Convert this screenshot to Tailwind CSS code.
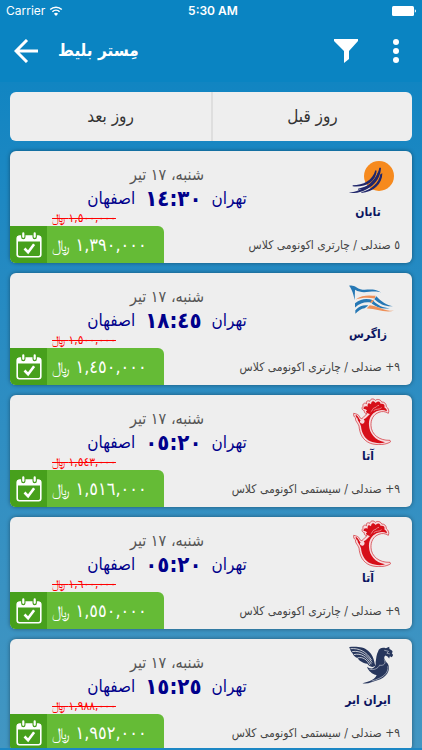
<!DOCTYPE html>
<html lang="fa">
<head>
  <meta charset="UTF-8">
  <meta name="viewport" content="width=device-width, initial-scale=1.0">
  <title>مِستر بلیط</title>
  <script src="https://cdn.jsdelivr.net/npm/@tailwindcss/browser@4"></script>
</head>
<body class="bg-[#0a84c2] font-['DejaVu_Sans_Condensed','DejaVu_Sans',sans-serif]">
  <!-- Icons and airline logos -->
  <svg class="hidden" xmlns="http://www.w3.org/2000/svg">
    <symbol id="calendar" viewBox="0 0 26 26">
      <rect x="1.2" y="4.2" width="23.6" height="20.6" rx="2.2" fill="none" stroke="#fff" stroke-width="1.6" />
      <path d="M1 9.5V6a2.5 2.5 0 0 1 2.5-2.5h19A2.5 2.5 0 0 1 25 6v3.5z" fill="#fff" />
      <path d="M7.3 1.5v3.6M18.7 1.5v3.6" stroke="#47a01c" stroke-width="4.4" stroke-linecap="round" />
      <path d="M7.3 1.4v3.4M18.7 1.4v3.4" stroke="#fff" stroke-width="2.2" stroke-linecap="round" />
      <path d="M8.5 16.5l3.6 3.7 6-8" fill="none" stroke="#fff" stroke-width="2.6" />
    </symbol>
    <symbol id="taban" viewBox="420 45 138 102">
      <circle cx="510" cy="93" r="45" fill="#f68a1e" />
      <g fill="#20276b">
        <path d="M431 121C463 121 491 106 499 76l4 1C501 110 469 128 431 124z" />
        <path d="M421 143C462 138 503 110 511 68h5C515 112 472 147 421 144z" />
        <path d="M457 142C487 133 510 116 514 88l6-3C520 118 493 141 457 144z" />
        <path d="M447 131C475 125 499 112 506 84l5-6C507 114 480 132 447 134z" />
      </g>
    </symbol>
    <symbol id="zagros" viewBox="420 55 138 92">
      <path d="M420 60C427 57 436 60 442 64 464 81 486 61 517 80 489 70 465 88 438 72L437 103C434 88 429 70 420 60z" fill="#2678b5" />
      <path d="M440 101C459 86 483 88 500 90L497 98C477 94 458 95 440 101z" fill="#ef9058" />
      <path d="M438 112C458 97 475 98 493 103L487 111C470 107 455 111 438 125zM439 133C453 119 465 117 478 119L467 127C457 127 448 135 439 144z" fill="#2678b5" />
      <path d="M502 91C515 106 533 118 552 121 529 123 512 114 496 100zM493 105C506 119 523 127 542 127 520 131 503 124 488 113z" fill="#2678b5" />
      <path d="M482 118C510 121 527 136 555 135 525 143 501 127 473 128zM488 103l7-1-5 8-7 1z" fill="#ef9058" />
    </symbol>
    <symbol id="ata" viewBox="11 9 114 141">
      <path d="M13 55C22 57 28 58 31 66 33 72 38 72 41 68 44 63 49 60 53 56 47 56 44 52 45 47 38 46 36 38 41 34 39 26 46 22 52 26 50 18 55 15 61 19 64 10 73 10 78 16 86 10 95 15 97 21 106 20 112 28 111 35 118 40 120 48 117 55 108 49 98 48 89 52 72 58 64 74 65 92 66 117 88 137 122 136L124 140C113 149 84 152 63 145 40 136 31 116 29 93 24 81 16 76 19 69 14 66 12 61 13 55z" fill="#f7dadd" stroke="#d0222b" stroke-width="2" stroke-linejoin="round" />
      <path d="M19 60C28 62 28 72 34 76 29 80 34 88 41 86 47 84 47 76 43 73 50 70 54 64 62 57 54 55 50 54 50 49 57 47 50 42 43 42 41 36 47 31 55 35 54 26 57 21 65 28 66 16 73 16 79 24 86 16 93 19 94 27 103 25 108 31 105 37 112 42 114 46 112 49 100 42 86 46 77 52 63 60 58 75 59 91 60 114 77 137 107 142 94 147 74 144 63 139 46 131 37 115 35 94 32 82 24 77 25 71 20 67 19 64 19 60z" fill="#d60f19" />
      <path d="M64 51C71 47 67 41 76 38 84 37 81 31 89 31M73 47C82 40 89 45 97 38" fill="none" stroke="#f3b5b8" stroke-width="2" />
    </symbol>
    <symbol id="iranair" viewBox="420 52 138 118">
      <path d="M420 55C440 53 464 54 477 66 491 77 495 93 499 112 490 119 480 114 475 106 460 103 449 96 446 89 437 85 432 80 430 74 425 69 423 63 420 55z" fill="#27365c" />
      <path d="M424 60C450 58 471 68 488 95M429 69C455 65 473 78 489 102M434 78C456 73 472 84 487 107M445 88C461 84 473 92 483 110" fill="none" stroke="#eee" stroke-width="2.4" />
      <path d="M508 67C509 60 520 55 531 59L541 54 542 61C550 65 554 68 549 74L553 79 549 86 543 83 541 90 536 84 530 81C521 87 529 97 537 106 548 126 531 149 505 156 490 161 477 168 460 165 483 160 499 152 503 140 490 138 477 127 474 115 487 126 502 118 500 101 502 90 502 78 508 67z" fill="#27365c" />
      <path d="M481 122C493 126 507 121 512 110 524 113 533 104 526 93M537 113C540 134 522 149 488 158M526 65l13 3-5 6 9 2" fill="none" stroke="#c7cbd5" stroke-width="2" />
    </symbol>
  </svg>

  <div class="flex h-screen flex-col overflow-hidden">
    <!-- Status bar -->
    <div class="grid h-5 shrink-0 grid-cols-3 items-center px-1.5 pt-0.5 font-['Inter',sans-serif] text-xs text-white">
      <div class="flex items-center gap-1">
        <span>Carrier</span>
        <svg class="h-3 w-3.5" viewBox="0 0 14 12" fill="none" stroke="currentColor" stroke-width="1.5">
          <path d="M1.2 4.5a8.3 8.3 0 0 1 11.6 0M3.4 6.8a5.2 5.2 0 0 1 7.2 0" />
          <path d="M7 11L4.9 8.7a3 3 0 0 1 4.2 0z" fill="currentColor" stroke="none" />
        </svg>
      </div>
      <span class="pl-1 text-center font-semibold">5:30 AM</span>
      <svg class="h-2.5 w-6 justify-self-end" viewBox="0 0 24 10" fill="currentColor">
        <rect width="22" height="10" rx="1.5" />
        <path d="M22.8 3.2q1.2.5 1.2 1.8t-1.2 1.8z" />
      </svg>
    </div>

    <!-- App bar -->
    <header class="flex h-[62px] shrink-0 items-center px-3.5 text-white">
      <button type="button" aria-label="بازگشت">
        <svg class="size-6" viewBox="0 0 24 24" fill="none" stroke="currentColor" stroke-width="3">
          <path d="M24 12H2.5M13 1L2 12l11 11" />
        </svg>
      </button>
      <h1 dir="rtl" class="ml-5 text-[17px] font-bold">مِستر بلیط</h1>
      <button type="button" aria-label="فیلتر" class="ml-auto">
        <svg class="size-6" viewBox="0 0 24 24" fill="currentColor">
          <path d="M0 0h24v2l-9 10v8l-5 4V12L0 2z" />
        </svg>
      </button>
      <button type="button" aria-label="منو" class="mr-1.5 ml-8">
        <svg class="h-6 w-3" viewBox="0 0 12 24" fill="currentColor">
          <circle cx="6" cy="3" r="3" /><circle cx="6" cy="12" r="3" /><circle cx="6" cy="21" r="3" />
        </svg>
      </button>
    </header>

    <main dir="rtl" class="flex min-h-0 flex-1 flex-col gap-2.5 overflow-hidden border-b-2 border-[#1c87c4] bg-linear-to-b from-[#1185c2] to-[#4296c2] p-2.5">
      <!-- Day switch -->
      <nav class="grid h-[49px] shrink-0 grid-cols-2 divide-x-2 divide-[#dedede] rounded-md bg-[#eee] text-[17px] text-[#333]">
        <button type="button">روز قبل</button>
        <button type="button">روز بعد</button>
      </nav>

      <div id="flights" class="flex flex-col gap-2.5"></div>
    </main>
  </div>

  <script>
    const flights = [
      { logo: 'taban', size: 'h-[34px] w-[46px]', airline: 'تابان', time: '١٤:٣٠', old: '١,٥٠٠,٠٠٠', price: '١,٣٩٠,٠٠٠', seats: '٥ صندلی / چارتری اکونومی کلاس' },
      { logo: 'zagros', size: 'h-[31px] w-[46px]', airline: 'زاگرس', time: '١٨:٤٥', old: '١,٥٠٠,٠٠٠', price: '١,٤٥٠,٠٠٠', seats: '٩+ صندلی / چارتری اکونومی کلاس' },
      { logo: 'ata', size: 'h-[47px] w-[38px]', airline: 'آتا', time: '٠٥:٢٠', old: '١,٥٤٣,٠٠٠', price: '١,٥١٦,٠٠٠', seats: '٩+ صندلی / سیستمی اکونومی کلاس' },
      { logo: 'ata', size: 'h-[47px] w-[38px]', airline: 'آتا', time: '٠٥:٢٠', old: '١,٦٠٠,٠٠٠', price: '١,٥٥٠,٠٠٠', seats: '٩+ صندلی / چارتری اکونومی کلاس' },
      { logo: 'iranair', size: 'h-[39px] w-[46px]', airline: 'ایران ایر', time: '١٥:٢٥', old: '١,٩٨٨,٠٠٠', price: '١,٩٥٢,٠٠٠', seats: '٩+ صندلی / سیستمی اکونومی کلاس' },
    ];

    document.getElementById('flights').innerHTML = flights.map(f => `
      <article class="overflow-hidden rounded-md bg-[#eee] shadow-[0_0_4px_rgba(0,0,0,0.4)]">
        <div class="flex h-[75px]">
          <div class="flex w-[88px] flex-col items-center">
            <div class="flex h-[52px] items-center pl-2">
              <svg class="${f.size}"><use href="#${f.logo}" /></svg>
            </div>
            <h2 class="text-xs leading-[18px] font-bold text-[#0b1560]">${f.airline}</h2>
          </div>
          <div class="flex flex-1 flex-col pt-3">
            <p class="text-center text-base leading-6 text-[#555]">شنبه، ١٧ تیر</p>
            <div class="flex h-6 items-center justify-center gap-2.5 text-[17px] text-[#00008b]">
              <span>تهران</span>
              <time class="text-[22px] leading-6 font-bold">${f.time}</time>
              <span>اصفهان</span>
            </div>
            <del class="w-[148px] self-end text-center text-xs leading-[14px] text-[#f00]">${f.old} ﷼</del>
          </div>
        </div>
        <div class="flex h-[37px] items-center justify-between pr-3">
          <p class="text-xs text-[#444]">${f.seats}</p>
          <button type="button" class="flex h-[37px] w-[154px] items-center overflow-hidden rounded-tr-md bg-[#65bb36] text-white">
            <span class="flex-1 pr-3 text-center text-lg">${f.price} <span class="text-base">﷼</span></span>
            <span class="flex h-[37px] w-[37px] items-center justify-center bg-[#47a01c]">
              <svg class="size-[26px]"><use href="#calendar" /></svg>
            </span>
          </button>
        </div>
      </article>`).join('');
  </script>
</body>
</html>
